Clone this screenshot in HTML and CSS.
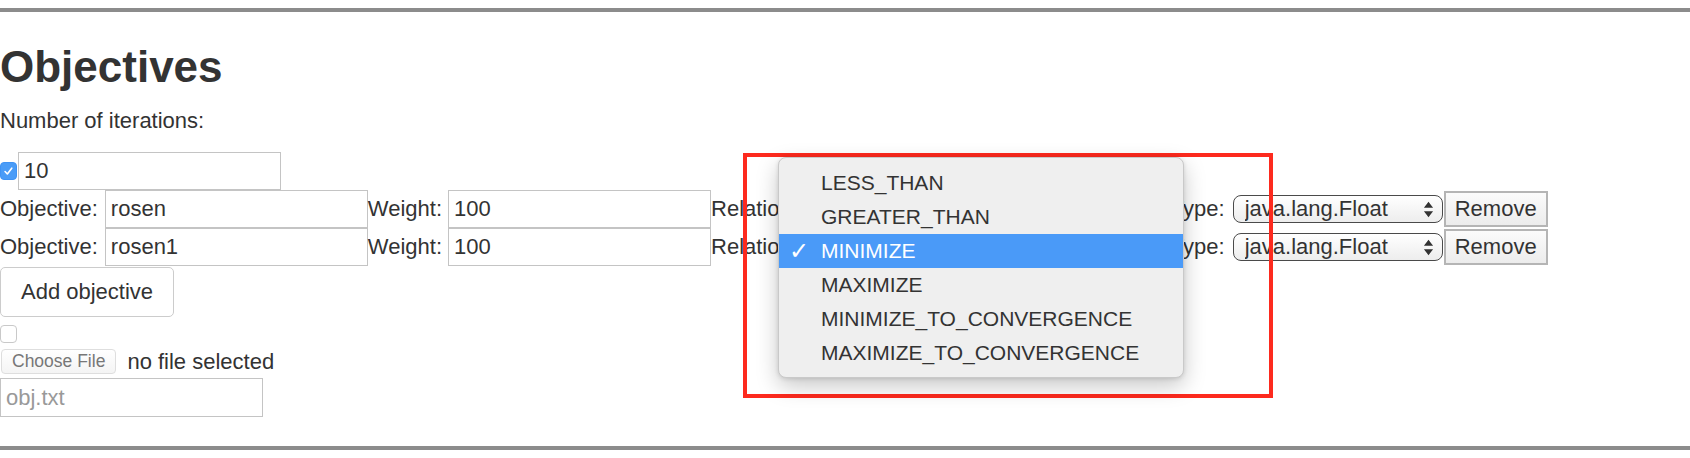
FILE: index.html
```html
<!DOCTYPE html>
<html lang="en">
<head>
<meta charset="utf-8">
<title>Objectives</title>
<link rel="stylesheet" href="styles.css">
</head>
<body>
<div class="page">
  <hr class="rule rule-top">
  <section class="objectives">
    <h1 class="title">Objectives</h1>
    <p class="field-label">Number of iterations:</p>
    <div class="row">
      <input type="checkbox" class="check" checked>
      <input type="text" class="text-input" value="10">
    </div>
    <div class="row">
      <span class="lbl">Objective:</span>
      <input type="text" class="text-input after-obj" value="rosen">
      <span class="lbl">Weight:</span>
      <input type="text" class="text-input after-weight" value="100">
      <span class="lbl">Relation:</span>
      <select class="select relation"><option>MINIMIZE</option></select>
      <span class="lbl">Type:</span>
      <select class="select type"><option>java.lang.Float</option></select>
      <button class="remove">Remove</button>
    </div>
    <div class="row">
      <span class="lbl">Objective:</span>
      <input type="text" class="text-input after-obj" value="rosen1">
      <span class="lbl">Weight:</span>
      <input type="text" class="text-input after-weight" value="100">
      <span class="lbl">Relation:</span>
      <select class="select relation"><option>MINIMIZE</option></select>
      <span class="lbl">Type:</span>
      <select class="select type"><option>java.lang.Float</option></select>
      <button class="remove">Remove</button>
    </div>
    <button class="add">Add objective</button>
    <div class="check-row"><input type="checkbox" class="check"></div>
    <div class="file-row">
      <button class="choose">Choose File</button>
      <span class="file-name">no file selected</span>
    </div>
    <input type="text" class="text-input file-path" placeholder="obj.txt">
  </section>
  <hr class="rule rule-bottom">

  <div class="highlight-box"></div>
  <ul class="popup-menu">
    <li class="menu-item">LESS_THAN</li>
    <li class="menu-item">GREATER_THAN</li>
    <li class="menu-item selected"><span class="tick">✓</span>MINIMIZE</li>
    <li class="menu-item">MAXIMIZE</li>
    <li class="menu-item">MINIMIZE_TO_CONVERGENCE</li>
    <li class="menu-item">MAXIMIZE_TO_CONVERGENCE</li>
  </ul>
</div>
</body>
</html>
```

FILE: styles.css
```css
html, body {
  margin: 0;
  padding: 0;
  background: #ffffff;
}

body {
  font-family: "Liberation Sans", Helvetica, Arial, sans-serif;
  font-size: 22px;
  color: #333333;
}

.page {
  position: relative;
  width: 1690px;
  height: 458px;
  overflow: hidden;
}

.rule {
  border: 0;
  height: 4px;
  background: #8c8c8c;
  margin: 0;
}

.rule-top {
  margin-top: 8px;
}

.rule-bottom {
  margin-top: 29px;
}

.objectives {
  display: flex;
  flex-direction: column;
  align-items: flex-start;
}

.title {
  margin: 31px 0 0;
  font-size: 44px;
  line-height: 48px;
  font-weight: 700;
  color: #333333;
}

.field-label {
  margin: 18px 0 19px;
  line-height: 24px;
}

.row {
  display: flex;
  align-items: center;
  height: 38px;
  white-space: nowrap;
}

.lbl {
  line-height: 24px;
}

.text-input {
  box-sizing: border-box;
  width: 263px;
  height: 38px;
  margin: 0;
  padding: 0 5px;
  border: 1px solid #c4c4c4;
  border-radius: 0;
  font-family: inherit;
  font-size: 22px;
  color: #333333;
  background: #ffffff;
  outline: none;
}

.text-input::placeholder {
  color: #999999;
}

.after-obj {
  margin-left: 7px;
}

.after-weight {
  margin-left: 6px;
}

.check {
  appearance: none;
  -webkit-appearance: none;
  box-sizing: border-box;
  width: 17px;
  height: 18px;
  margin: 0 1px 0 0;
  border: 1px solid #c9c9c9;
  border-radius: 4px;
  background: #ffffff;
}

.check:checked {
  border-color: #3f93f4;
  background: #4a9cf7 url("data:image/svg+xml,%3Csvg xmlns='http://www.w3.org/2000/svg' viewBox='0 0 17 18'%3E%3Cpath d='M4.6 9.6l2.6 2.8 5-6.6' fill='none' stroke='white' stroke-width='1.8' stroke-linecap='round' stroke-linejoin='round'/%3E%3C/svg%3E") center / 100% 100% no-repeat;
}

.select {
  appearance: none;
  -webkit-appearance: none;
  box-sizing: border-box;
  height: 28px;
  margin: 0;
  padding: 0 0 0 11px;
  border: 1px solid #4a4a4a;
  border-radius: 8px;
  font-family: inherit;
  font-size: 22px;
  line-height: 26px;
  color: #333333;
  background: url("data:image/svg+xml,%3Csvg xmlns='http://www.w3.org/2000/svg' viewBox='0 0 12 18'%3E%3Cpath d='M6 0.5L11 7H1z M6 17.5L11 11H1z' fill='%23333333'/%3E%3C/svg%3E") right 8px center / 11px 17px no-repeat,
              linear-gradient(#ffffff, #ededed);
}

.relation {
  width: 366px;
  margin-left: 7px;
}

.type {
  width: 210px;
  margin-left: 8px;
}

.remove {
  box-sizing: border-box;
  width: 104px;
  height: 36px;
  margin: 0 0 0 1px;
  padding: 0;
  border: 2px solid #b5b5b5;
  border-radius: 0;
  background: linear-gradient(#fbfbfb, #ececec);
  font-family: inherit;
  font-size: 22px;
  color: #333333;
}

.add {
  box-sizing: border-box;
  height: 50px;
  margin: 1px 0 0;
  padding: 0 20px;
  border: 1px solid #cccccc;
  border-radius: 5px;
  background: #ffffff;
  font-family: inherit;
  font-size: 22px;
  line-height: 24px;
  color: #333333;
}

.check-row {
  display: flex;
  margin-top: 8px;
}

.file-row {
  display: flex;
  align-items: center;
  margin-top: 6px;
  height: 25px;
}

.choose {
  box-sizing: border-box;
  height: 25px;
  margin: 0 0 0 1px;
  padding: 0 10px;
  border: 1px solid #dedede;
  border-radius: 4px;
  background: linear-gradient(#ffffff, #f4f4f4);
  font-family: inherit;
  font-size: 17.5px;
  color: #777777;
}

.file-name {
  margin-left: 11px;
  line-height: 24px;
}

.file-path {
  height: 39px;
  margin-top: 4px;
}

/* annotation rectangle drawn over the page */
.highlight-box {
  position: absolute;
  left: 743px;
  top: 153px;
  width: 530px;
  height: 245px;
  box-sizing: border-box;
  border: 4px solid #fd2a1e;
}

/* open native popup menu */
.popup-menu {
  position: absolute;
  left: 778px;
  top: 157px;
  width: 406px;
  height: 221px;
  box-sizing: border-box;
  margin: 0;
  padding: 8px 0 7px;
  list-style: none;
  background: #efefef;
  border: 1px solid #c9c9c9;
  border-radius: 8px;
  box-shadow: 0 8px 22px rgba(0, 0, 0, 0.22), 0 1px 4px rgba(0, 0, 0, 0.12);
}

.menu-item {
  position: relative;
  height: 34px;
  padding-left: 42px;
  font-size: 21px;
  line-height: 34px;
  color: #333333;
}

.menu-item.selected {
  background: #4a9af8;
  color: #ffffff;
}

.tick {
  position: absolute;
  left: 10px;
  top: 0;
  font-family: "DejaVu Sans", sans-serif;
  font-size: 24px;
  line-height: 34px;
  font-weight: 700;
  color: #ffffff;
}
```
